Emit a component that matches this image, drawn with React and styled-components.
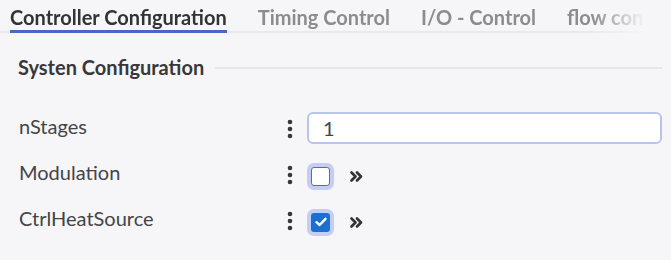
import React from 'react';
import styled, { createGlobalStyle } from 'styled-components';

const GlobalStyle = createGlobalStyle`
  html, body {
    margin: 0;
    padding: 0;
    background: #f6f6f8;
  }
  body {
    font-family: Lato, "Open Sans", sans-serif;
    color: #3d3d3f;
  }
`;

const tabs = [
  { id: 'ctrl', label: 'Controller Configuration', active: true },
  { id: 'timing', label: 'Timing Control' },
  { id: 'io', label: 'I/O - Control' },
  { id: 'flow', label: 'flow con' },
];

const Kebab = () => (
  <svg width="6" height="20" viewBox="0 0 6 20">
    <circle cx="3" cy="3" r="2.3" fill="#38383a" />
    <circle cx="3" cy="10" r="2.3" fill="#38383a" />
    <circle cx="3" cy="17" r="2.3" fill="#38383a" />
  </svg>
);

const Chevrons = () => (
  <svg width="13" height="11" viewBox="0 0 13 11">
    <path
      d="M1.5 1.5 L5.5 5.5 L1.5 9.5 M7 1.5 L11 5.5 L7 9.5"
      fill="none"
      stroke="#333335"
      strokeWidth="2.6"
      strokeLinecap="round"
      strokeLinejoin="round"
    />
  </svg>
);

const Check = () => (
  <svg width="12" height="10" viewBox="0 0 12 10">
    <path
      d="M1.5 5.2 L4.6 8 L10.5 1.8"
      fill="none"
      stroke="#ffffff"
      strokeWidth="2.4"
      strokeLinecap="round"
      strokeLinejoin="round"
    />
  </svg>
);

const App = () => {
  return (
    <Page>
      <GlobalStyle />
      <TabBar>
        {tabs.map((tab) => (
          <Tab key={tab.id} $active={tab.active}>
            {tab.label}
          </Tab>
        ))}
      </TabBar>
      <Section>
        <SectionHeader>
          <SectionTitle>Systen Configuration</SectionTitle>
          <SectionLine />
        </SectionHeader>
        <Rows>
          <Row>
            <Label>nStages</Label>
            <Handle>
              <Kebab />
            </Handle>
            <Input defaultValue="1" />
          </Row>
          <Row>
            <Label>Modulation</Label>
            <Handle>
              <Kebab />
            </Handle>
            <Control>
              <CheckBox $checked={false} />
              <Expand>
                <Chevrons />
              </Expand>
            </Control>
          </Row>
          <Row>
            <Label>CtrlHeatSource</Label>
            <Handle>
              <Kebab />
            </Handle>
            <Control>
              <CheckBox $checked>
                <Check />
              </CheckBox>
              <Expand>
                <Chevrons />
              </Expand>
            </Control>
          </Row>
        </Rows>
      </Section>
    </Page>
  );
};

export default App;

const Page = styled.div`
  width: 671px;
  height: 260px;
  padding-right: 9px;
  box-sizing: border-box;
  overflow: hidden;
`;

const TabBar = styled.div`
  display: flex;
  gap: 31px;
  height: 31px;
  padding-left: 10px;
  border-bottom: 2px solid #e9e9ed;
  white-space: nowrap;
  -webkit-mask-image: linear-gradient(to right, #000 592px, transparent 645px);
  mask-image: linear-gradient(to right, #000 592px, transparent 645px);
`;

const Tab = styled.div`
  position: relative;
  flex: none;
  padding-top: 5px;
  font-size: 20px;
  line-height: 24px;
  font-weight: 700;
  color: ${(p) => (p.$active ? '#333336' : '#8c8c8e')};

  &::after {
    content: '';
    display: ${(p) => (p.$active ? 'block' : 'none')};
    position: absolute;
    left: 0;
    right: 0;
    bottom: -2px;
    height: 3px;
    background: #4a66c6;
  }
`;

const Section = styled.div`
  padding: 21px 0 0 18px;
`;

const SectionHeader = styled.div`
  display: flex;
  align-items: center;
  gap: 11px;
`;

const SectionTitle = styled.div`
  font-size: 20px;
  line-height: 26px;
  font-weight: 700;
  color: #38383b;
`;

const SectionLine = styled.div`
  flex: 1;
  height: 2px;
  margin-top: 2px;
  background: #e7e7eb;
`;

const Rows = styled.div`
  display: flex;
  flex-direction: column;
  margin-top: 25px;
`;

const Row = styled.div`
  display: grid;
  grid-template-columns: 269px 20px 1fr;
  align-items: center;
  height: 46px;
`;

const Label = styled.div`
  padding-left: 1px;
  padding-bottom: 5px;
  font-size: 20px;
  color: #444447;
`;

const Handle = styled.div`
  display: flex;
  align-items: center;
  padding-top: 2px;
`;

const Input = styled.input`
  box-sizing: border-box;
  width: 100%;
  height: 32px;
  padding: 0 14px;
  border: 2px solid #b9c4ee;
  border-radius: 6px;
  background: #ffffff;
  font-family: Lato, "Open Sans", sans-serif;
  font-size: 20px;
  color: #454548;
  outline: none;
`;

const Control = styled.div`
  display: flex;
  align-items: center;
  gap: 20px;
  padding-left: 4px;
  padding-top: 4px;
`;

const CheckBox = styled.div`
  box-sizing: border-box;
  width: 19px;
  height: 19px;
  display: flex;
  align-items: center;
  justify-content: center;
  border-radius: 3px;
  border: ${(p) => (p.$checked ? 'none' : '1.5px solid #6e6e72')};
  background: ${(p) => (p.$checked ? '#1b6fd1' : '#ffffff')};
  box-shadow: 0 0 0 4px #c4cdf3;
`;

const Expand = styled.div`
  display: flex;
  align-items: center;
`;
